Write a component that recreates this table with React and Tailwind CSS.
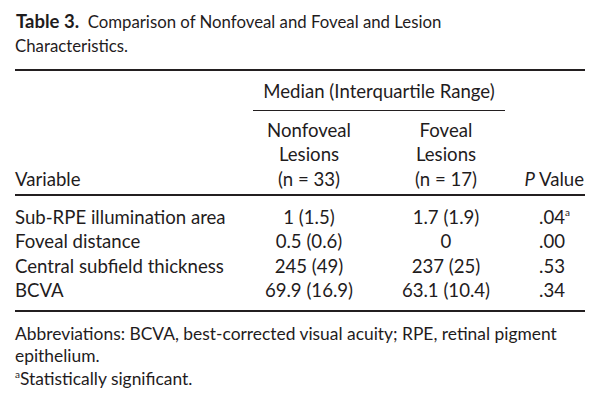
import React from "react";

const rows = [
  ["Sub-RPE illumination area", "1 (1.5)", "1.7 (1.9)", ".04", true],
  ["Foveal distance", "0.5 (0.6)", "0", ".00", false],
  ["Central subfield thickness", "245 (49)", "237 (25)", ".53", false],
  ["BCVA", "69.9 (16.9)", "63.1 (10.4)", ".34", false],
];

export default function App() {
  return (
    <div
      className="w-[600px] h-[406px] bg-white text-[#1f1c1d] overflow-hidden px-[15px] pt-[10px]"
      style={{ fontFamily: "Lato, 'Open Sans', sans-serif" }}
    >
      <div className="text-[16.8px] leading-[23.5px]">
        <span className="font-bold text-[18.5px] pl-[1px]">Table 3.</span>
        <span>&nbsp; Comparison of Nonfoveal and Foveal and Lesion</span>
        <br />
        <span>Characteristics.</span>
      </div>
      <div className="mt-[12px] h-[1.5px] bg-[#231f20]" />
      <div className="text-[18.6px] leading-[24px]">
        <div className="ml-[238px] w-[252px] pt-[8px] pb-[7px] text-center border-b-[1.5px] border-[#231f20]">
          Median (Interquartile Range)
        </div>
        <div className="flex items-end pt-[7px] pb-[3px] leading-[24.5px]">
          <div className="w-[238px] shrink-0">Variable</div>
          <div className="w-[112px] shrink-0 text-center">
            Nonfoveal
            <br />
            Lesions
            <br />
            (n = 33)
          </div>
          <div className="w-[162px] shrink-0 text-center">
            Foveal
            <br />
            Lesions
            <br />
            (n = 17)
          </div>
          <div className="flex-1 min-w-0 flex justify-end whitespace-nowrap pr-[1px]">
            <span>
              <span className="italic">P</span> Value
            </span>
          </div>
        </div>
      </div>
      <div className="h-[1.5px] bg-[#231f20]" />
      <div className="text-[18.6px] leading-[24.3px] pt-[9.5px] pb-[8px]">
        {rows.map((r) => (
          <div key={r[0]} className="flex">
            <div className="w-[238px] shrink-0">{r[0]}</div>
            <div className="w-[112px] shrink-0 text-center">{r[1]}</div>
            <div className="w-[162px] shrink-0 text-center">{r[2]}</div>
            <div className="flex-1 pl-[12px] whitespace-nowrap">
              {r[3]}
              {r[4] && <sup className="text-[10px] top-[-8px]">a</sup>}
            </div>
          </div>
        ))}
      </div>
      <div className="h-[1.5px] bg-[#231f20]" />
      <div className="pt-[11px] text-[17.4px] leading-[22.5px]">
        <div>
          Abbreviations: BCVA, best-corrected visual acuity; RPE, retinal pigment
          epithelium.
        </div>
        <div>
          <sup className="text-[10px] top-[-7px]">a</sup>Statistically significant.
        </div>
      </div>
    </div>
  );
}
